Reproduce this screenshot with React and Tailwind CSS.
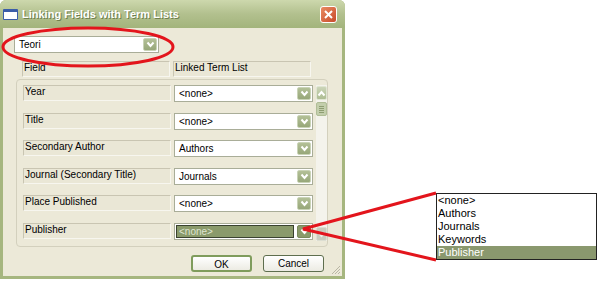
import React from 'react';

const rows = [
  { label: 'Year', value: '<none>' },
  { label: 'Title', value: '<none>' },
  { label: 'Secondary Author', value: 'Authors' },
  { label: 'Journal (Secondary Title)', value: 'Journals' },
  { label: 'Place Published', value: '<none>' },
  { label: 'Publisher', value: '<none>', selected: true },
];

const listItems = ['<none>', 'Authors', 'Journals', 'Keywords', 'Publisher'];

const Chevron = ({ up = false, color = 'white' }) => (
  <svg width="9" height="7" viewBox="0 0 9 7">
    <path d={up ? 'M1.5 5.5 L4.5 2 L7.5 5.5' : 'M1.5 1.5 L4.5 5 L7.5 1.5'} fill="none" stroke={color} strokeWidth="2" />
  </svg>
);

const DropButton = ({ dark = false }) => (
  <div
    className={`w-[14px] h-full flex items-center justify-center rounded-[2px] border ${
      dark ? 'bg-[#8a9a6a] border-[#7a8a5c]' : 'bg-gradient-to-b from-[#b3c097] to-[#97a779] border-[#c9d3b6]'
    }`}
  >
    <Chevron />
  </div>
);

const Combo = ({ value, selected = false, className = '' }) => (
  <div className={`flex h-[17px] bg-white border border-[#a9ad98] p-[1px] ${className}`}>
    {selected ? (
      <div className="flex-1 flex items-center bg-[#8a9a6b] border border-[#3a4230] pl-[2px] text-[#dfe5d2] text-[10px] mr-[3px]">
        {value}
      </div>
    ) : (
      <div className="flex-1 flex items-center pl-[3px] text-[10px] text-black">{value}</div>
    )}
    <DropButton dark={selected} />
  </div>
);

const LabelBox = ({ children, className = '' }) => (
  <div
    className={`h-[16px] border border-t-[#c9c5b2] border-l-[#c9c5b2] border-b-[#f7f6ef] border-r-[#f7f6ef] bg-[#eae7d6] pl-[1px] text-[10px] leading-[12px] text-black ${className}`}
  >
    {children}
  </div>
);

const App = () => {
  return (
    <div
      className="relative w-[598px] h-[282px] bg-white overflow-hidden flex"
      style={{ fontFamily: '"Liberation Sans", Arial, sans-serif' }}
    >
      {/* dialog window */}
      <div className="w-[345px] h-[279px] flex flex-col bg-[#a6b67f] rounded-t-[6px] shrink-0">
        {/* title bar */}
        <div className="h-[28px] flex items-center pl-[3px] pr-[8px] rounded-t-[6px] bg-gradient-to-b from-[#cdd8ad] via-[#b2c08e] to-[#a3b47c]">
          <div className="w-[15px] h-[11px] bg-white border border-[#3a5da8] border-t-[3px] rounded-[1px] mt-[1px]" />
          <span className="ml-[4px] text-white font-bold text-[11px] [text-shadow:1px_1px_0_#6f7f4f]">
            Linking Fields with Term Lists
          </span>
          <div className="ml-auto w-[17px] h-[17px] rounded-[3px] border border-white bg-gradient-to-br from-[#e88a62] to-[#c84a2a] flex items-center justify-center">
            <svg width="11" height="11" viewBox="0 0 11 11">
              <path d="M2 2 L9 9 M9 2 L2 9" stroke="white" strokeWidth="2" />
            </svg>
          </div>
        </div>

        {/* body */}
        <div className="relative mx-[3px] h-[248px] bg-[#ece9d8] flex flex-col">
          <Combo value="Teori" className="mt-[8px] ml-[11px] w-[145px]" />

          <div className="flex gap-[3px] mt-[8px] ml-[19px]">
            <LabelBox className="w-[148px] h-[15px]">Field</LabelBox>
            <LabelBox className="w-[138px] h-[15px]">Linked Term List</LabelBox>
          </div>

          <div className="mt-[2px] ml-[13px] w-[312px] h-[168px] border border-[#d3d0bd] rounded-[4px] flex pt-[5px] pl-[6px]">
            <div className="flex flex-col gap-[10.5px] w-[290px]">
              {rows.map((r) => (
                <div key={r.label} className="flex gap-[3px] h-[17px]">
                  <LabelBox className="w-[148px]">{r.label}</LabelBox>
                  <Combo value={r.value} selected={r.selected} className="w-[139px]" />
                </div>
              ))}
            </div>
            {/* scrollbar */}
            <div className="ml-[3px] w-[11px] h-[156px] bg-[#f4f3ec] flex flex-col">
              <div className="h-[14px] mt-[1px] rounded-[2px] bg-gradient-to-b from-[#cbd5b8] to-[#aebd93] border border-[#dfe5d2] flex items-center justify-center">
                <Chevron up />
              </div>
              <div className="h-[14px] mt-[2px] rounded-[2px] bg-[#c3ceac] border border-[#b0bd96] flex flex-col items-center justify-center gap-[1px]">
                <div className="w-[5px] h-[1px] bg-[#8e9d72]" />
                <div className="w-[5px] h-[1px] bg-[#8e9d72]" />
                <div className="w-[5px] h-[1px] bg-[#8e9d72]" />
                <div className="w-[5px] h-[1px] bg-[#8e9d72]" />
              </div>
              <div className="mt-auto h-[14px] rounded-[2px] bg-[#c9ccbd] border border-[#dcded2] flex items-center justify-center">
                <Chevron color="#eeefe8" />
              </div>
            </div>
          </div>

          <div className="flex justify-end gap-[11px] mt-[8px] pr-[18px]">
            <button className="w-[61px] h-[17px] rounded-[3px] border-2 border-[#7f9c5c] bg-gradient-to-b from-white to-[#ecebe3] text-[10px] text-black">
              OK
            </button>
            <button className="w-[61px] h-[17px] rounded-[3px] border border-[#5e6e4e] bg-gradient-to-b from-white to-[#ecebe3] text-[10px] text-black">
              Cancel
            </button>
          </div>

          {/* resize grip */}
          <svg className="absolute right-[1px] bottom-[1px]" width="12" height="12" viewBox="0 0 12 12">
            <path d="M11 3 L3 11 M11 6 L6 11 M11 9 L9 11" stroke="#b9b6a4" strokeWidth="1" />
          </svg>
        </div>
        <div className="h-[3px]" />
      </div>

      {/* dropdown callout */}
      <div className="ml-[91px] mt-[193px] w-[161px] h-[67px] border border-[#222] bg-white flex flex-col">
        {listItems.map((it) => (
          <div
            key={it}
            className={`h-[13px] leading-[13px] pl-[1px] text-[11px] ${
              it === 'Publisher' ? 'bg-[#8a986e] text-white' : 'text-black'
            }`}
          >
            {it}
          </div>
        ))}
      </div>

      {/* red annotations */}
      <svg className="absolute inset-0 pointer-events-none" width="598" height="282" viewBox="0 0 598 282">
        <ellipse cx="88" cy="47" rx="85" ry="19" fill="none" stroke="#e3151c" strokeWidth="3" />
        <path d="M436 193 L303 229 L436 260" fill="none" stroke="#e3151c" strokeWidth="3" />
      </svg>
    </div>
  );
};

export default App;
